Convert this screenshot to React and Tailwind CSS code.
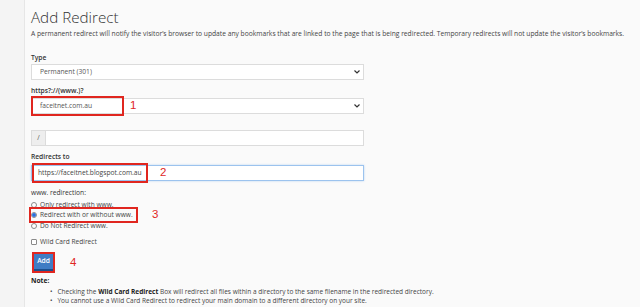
import React from 'react';

const font = { fontFamily: '"Open Sans", "Noto Sans", sans-serif' };

const Chevron = () => (
  <svg width="6" height="4" viewBox="0 0 6 4" className="absolute right-[3px] top-1/2 -translate-y-1/2">
    <path d="M0.5 0.5 L3 3 L5.5 0.5" fill="none" stroke="#333" strokeWidth="1.2" />
  </svg>
);

const Marker = ({ n, className }) => (
  <span
    className={`absolute text-[11.5px] leading-none text-[#e0261f] ${className}`}
    style={{ fontFamily: '"Liberation Sans", Arial, sans-serif' }}
  >
    {n}
  </span>
);

const Radio = ({ checked, label }) => (
  <div className="flex h-[8px] items-center gap-[3px]">
    <span className="flex h-[6px] w-[6px] items-center justify-center rounded-full border border-[#8a8a8a] bg-white">
      {checked && <span className="h-[4px] w-[4px] rounded-full bg-[#2a6fdb]" />}
    </span>
    <span className="text-[6.6px] text-[#444]">{label}</span>
  </div>
);

export default function App() {
  return (
    <div className="flex h-[307px] w-[640px] overflow-hidden bg-[#fafafa]" style={font}>
      <div className="w-[25px] shrink-0 border-r border-[#e6e6e6] bg-[#f4f4f4]" />
      <div className="flex flex-1 flex-col pl-[6px]">
        <div className="mt-[8px] flex h-[18px] items-center text-[15.2px] font-light text-[#333]">
          Add Redirect
        </div>
        <div className="mt-[4px] flex h-[8px] items-center whitespace-nowrap text-[6.7px] text-[#444]">
          A permanent redirect will notify the visitor’s browser to update any bookmarks that are linked to the page that is being redirected. Temporary redirects will not update the visitor’s bookmarks.
        </div>

        <div className="mt-[16px] flex h-[8px] items-center text-[6.7px] font-semibold text-[#333]">Type</div>
        <div className="relative mt-[2px] flex h-[16px] w-[333px] items-center border border-[#dcdcdc] bg-white pl-[8px] text-[6.7px] text-[#555]">
          Permanent (301)
          <Chevron />
        </div>

        <div className="mt-[7px] flex h-[8px] items-center text-[6.7px] font-semibold text-[#333]">https?://(www.)?</div>
        <div className="relative mt-[3px] flex h-[16px] w-[333px] items-center border border-[#dcdcdc] bg-white pl-[8px] text-[6.7px] text-[#555]">
          faceitnet.com.au
          <Chevron />
          <div className="absolute -left-[1px] -top-[3px] h-[20px] w-[93px] border-2 border-[#e0261f]" />
          <Marker n="1" className="left-[98px] top-[1px]" />
        </div>

        <div className="mt-[16px] flex h-[16px] w-[333px] border border-[#dcdcdc] bg-white">
          <div className="flex w-[14px] items-center justify-center border-r border-[#dcdcdc] bg-[#eeeeee] text-[6.7px] text-[#555]">/</div>
        </div>

        <div className="mt-[7px] flex h-[8px] items-center text-[6.7px] font-semibold text-[#333]">Redirects to</div>
        <div className="relative mt-[4px] flex h-[16px] w-[333px] items-center border border-[#9cc3ee] bg-white pl-[6px] text-[6.7px] text-[#444] shadow-[0_0_2px_#bcd6f3]">
          https://faceitnet.blogspot.com.au
          <div className="absolute -left-[0px] -top-[3px] h-[20px] w-[116px] border-2 border-[#e0261f]" />
          <Marker n="2" className="left-[128px] top-[1px]" />
        </div>

        <div className="mt-[8px] flex h-[8px] items-center text-[6.7px] text-[#333]">www. redirection:</div>
        <div className="mt-[4px]">
          <Radio label="Only redirect with www." />
        </div>
        <div className="relative mt-[2px]">
          <Radio checked label="Redirect with or without www." />
          <div className="absolute -left-[2px] -top-[4px] h-[16px] w-[109px] border-2 border-[#e0261f]" />
          <Marker n="3" className="left-[121px] -top-[2px]" />
        </div>
        <div className="mt-[3px]">
          <Radio label="Do Not Redirect www." />
        </div>

        <div className="mt-[8px] flex h-[8px] items-center gap-[3px]">
          <span className="h-[6px] w-[6px] rounded-[1px] border border-[#8a8a8a] bg-white" />
          <span className="text-[6.6px] text-[#444]">Wild Card Redirect</span>
        </div>

        <div className="relative mt-[8px] flex">
          <div className="ml-[3px] flex h-[17px] w-[19px] items-center justify-center border-b-2 border-[#1d4f8c] bg-[#3f7cc4] text-[6.7px] font-semibold text-white">
            Add
          </div>
          <div className="absolute -top-[2px] left-[1px] h-[21px] w-[23px] border-2 border-[#e0261f]" />
          <Marker n="4" className="left-[39px] top-[3px]" />
        </div>

        <div className="mt-[6px] flex h-[8px] items-center text-[6.7px] font-bold text-[#222]">Note:</div>
        <ul className="mt-[3px] pl-[19px] text-[6.5px] text-[#444]">
          <li className="flex h-[8px] items-center gap-[5px]">
            <span>•</span>
            <span>
              Checking the <b className="font-bold text-[#222]">Wild Card Redirect</b> Box will redirect all files within a directory to the same filename in the redirected directory.
            </span>
          </li>
          <li className="mt-[1px] flex h-[8px] items-center gap-[5px]">
            <span>•</span>
            <span>You cannot use a Wild Card Redirect to redirect your main domain to a different directory on your site.</span>
          </li>
        </ul>
      </div>
    </div>
  );
}
